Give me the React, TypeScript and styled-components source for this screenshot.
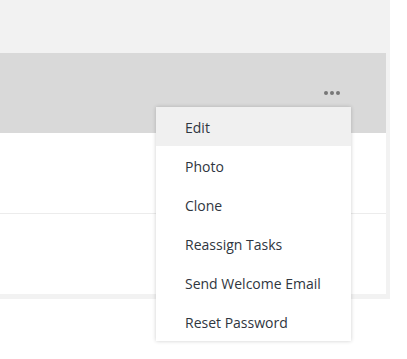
import React, { useState } from 'react';
import styled, { createGlobalStyle } from 'styled-components';

const GlobalStyle = createGlobalStyle`
  html, body, #root {
    margin: 0;
    padding: 0;
    min-height: 100vh;
    background: #ffffff;
    font-family: "Open Sans", "Liberation Sans", Arial, sans-serif;
  }
`;

const Frame = styled.div`
  width: 390px;
  background: #f2f2f2;
  padding: 0 4px 5px 0;
  box-sizing: border-box;
`;

const TopBar = styled.div`
  height: 53px;
`;

const Table = styled.div`
  background: #ffffff;
  display: flex;
  flex-direction: column;
`;

const HeaderRow = styled.div`
  position: relative;
  height: 80px;
  background: #d9d9d9;
  display: flex;
  align-items: center;
  justify-content: flex-end;
  padding-right: 44px;
`;

const Row = styled.div<{ $divider?: boolean }>`
  height: 80px;
  background: #ffffff;
  border-bottom: ${(p) => (p.$divider ? '1px solid #ececec' : 'none')};
`;

const DotsButton = styled.button`
  display: flex;
  gap: 2px;
  align-items: center;
  background: none;
  border: none;
  padding: 6px 2px;
  cursor: pointer;
`;

const Dot = styled.span`
  width: 4px;
  height: 4px;
  border-radius: 50%;
  background: #777777;
`;

const Menu = styled.ul`
  position: absolute;
  top: 54px;
  right: 35px;
  width: 195px;
  margin: 0;
  padding: 0;
  list-style: none;
  background: #ffffff;
  box-shadow: 0 0 4px rgba(0, 0, 0, 0.2);
  z-index: 10;
`;

const MenuItem = styled.li<{ $active?: boolean }>`
  height: 39px;
  box-sizing: border-box;
  display: flex;
  align-items: center;
  padding: 2px 0 0 29px;
  font-size: 14px;
  color: #2f3640;
  background: ${(p) => (p.$active ? '#f0f0f0' : '#ffffff')};
  cursor: pointer;
`;

const items = ['Edit', 'Photo', 'Clone', 'Reassign Tasks', 'Send Welcome Email', 'Reset Password'];

export default function App() {
  const [open, setOpen] = useState(true);
  return (
    <>
      <GlobalStyle />
      <Frame>
        <TopBar />
        <Table>
          <HeaderRow>
            <DotsButton onClick={() => setOpen(!open)} aria-label="More actions">
              <Dot />
              <Dot />
              <Dot />
            </DotsButton>
            {open && (
              <Menu>
                {items.map((label, i) => (
                  <MenuItem key={label} $active={i === 0}>
                    {label}
                  </MenuItem>
                ))}
              </Menu>
            )}
          </HeaderRow>
          <Row $divider />
          <Row />
        </Table>
      </Frame>
    </>
  );
}
